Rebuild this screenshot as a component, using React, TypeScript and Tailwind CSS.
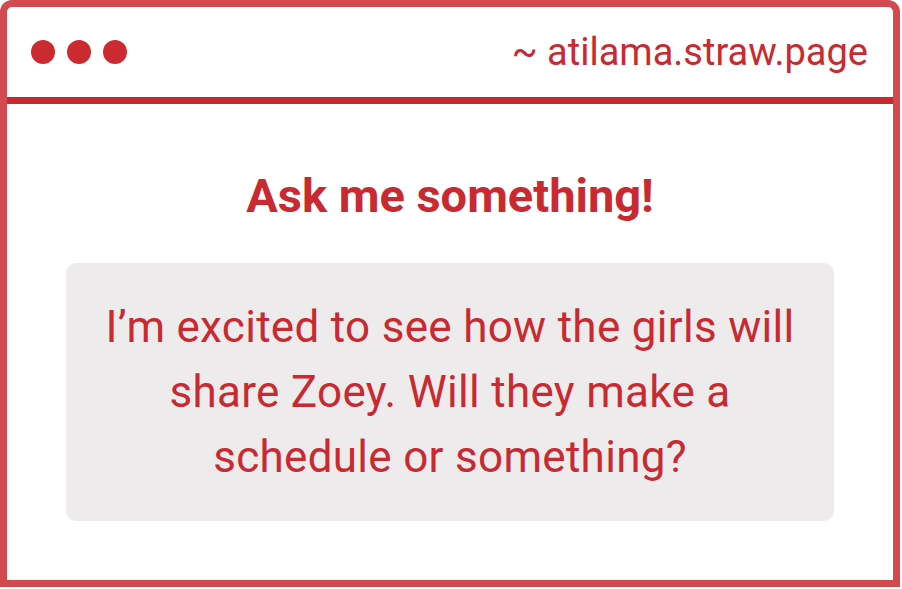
import React from "react";

const red = "text-[#c92a31]";

export default function App() {
  return (
    <div className="h-[589px] w-[902px] bg-white" style={{ fontFamily: "Roboto, 'Liberation Sans', sans-serif" }}>
      <div className="flex h-[587px] w-[900px] flex-col rounded-t-[12px] border-[7px] border-[#d34950] bg-white">
        <div className="flex h-[90px] items-center justify-between pl-[24px] pr-[25px]">
          <div className="flex gap-[12px]">
            <span className="h-[24px] w-[24px] rounded-full bg-[#cc2a31]" />
            <span className="h-[24px] w-[24px] rounded-full bg-[#cc2a31]" />
            <span className="h-[24px] w-[24px] rounded-full bg-[#cc2a31]" />
          </div>
          <div className={`text-[38px] leading-none ${red}`}>~ atilama.straw.page</div>
        </div>
        <div className="h-[7px] bg-[#c9282f]" />
        <div className="flex flex-1 flex-col items-center pt-[68px]">
          <h1 className={`text-[47px] font-bold leading-none ${red}`}>Ask me something!</h1>
          <div className="mt-[44px] flex h-[258px] w-[768px] items-center justify-center rounded-[10px] bg-[#edebec] px-[36px]">
            <p className={`text-center text-[44px] leading-[65px] tracking-[0.3px] ${red}`}>
              I’m excited to see how the girls will share Zoey. Will they make a schedule or something?
            </p>
          </div>
        </div>
      </div>
    </div>
  );
}
